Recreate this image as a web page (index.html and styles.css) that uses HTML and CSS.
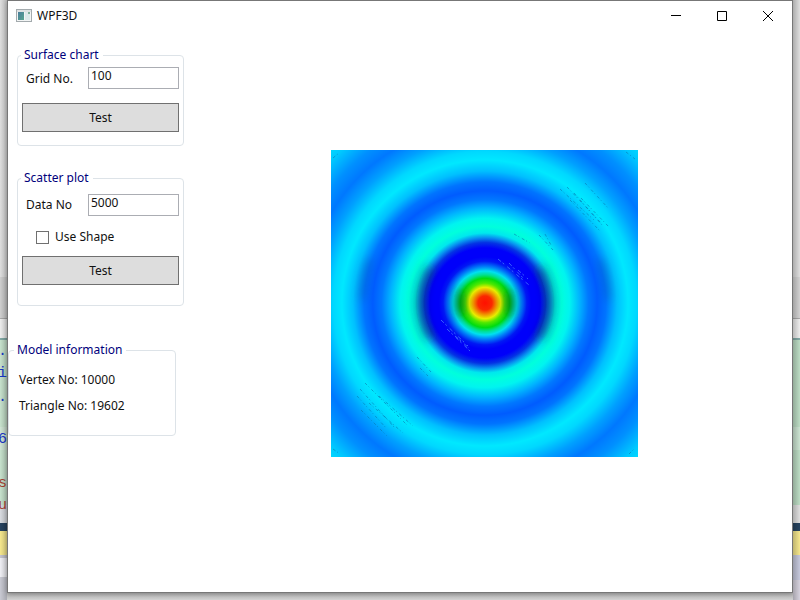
FILE: index.html
```html
<!DOCTYPE html>
<html lang="en">
<head>
<meta charset="utf-8">
<title>WPF3D</title>
<link rel="stylesheet" href="styles.css">
</head>
<body>
<div class="desktop">
  <div class="edge edge-left" aria-hidden="true">
    <span class="code">0.</span>
    <span class="code">ui</span>
    <span class="code gap-m">r.</span>
    <span class="code gap-l">o6</span>
    <span class="code str">s</span>
    <span class="code str low">u</span>
  </div>
  <main class="window">
    <header class="titlebar">
      <svg class="app-icon" width="16" height="14" viewBox="0 0 16 14">
        <defs><linearGradient id="pane" x2="1" y2="1"><stop offset="0" stop-color="#4a7d9c"/><stop offset="1" stop-color="#57a58e"/></linearGradient></defs>
        <rect x=".5" y=".5" width="15" height="12" fill="#f3f5f5" stroke="#a3aaad"/>
        <path d="M1 2h14" stroke="#c9cfd1"/>
        <rect x="2" y="3" width="6" height="8" fill="url(#pane)"/>
        <rect x="9" y="3" width="5" height="8" fill="#dce9ea"/>
        <rect x="12" y="3" width="2" height="2" fill="#7fb09b"/>
      </svg>
      <h1>WPF3D</h1>
      <div class="caption">
        <button aria-label="Minimize"><svg width="12" height="12" viewBox="0 0 12 12"><path d="M1 5.500h10"/></svg></button>
        <button aria-label="Maximize"><svg width="12" height="12" viewBox="0 0 12 12"><path d="M1.500 1.500h9v9h-9z"/></svg></button>
        <button aria-label="Close"><svg width="12" height="12" viewBox="0 0 12 12"><path d="M1 1l10 10M11 1L1 11"/></svg></button>
      </div>
    </header>
    <div class="content">
      <aside class="panel">
        <fieldset class="surface">
          <legend>Surface chart</legend>
          <div class="row"><label for="grid">Grid No.</label><input id="grid" type="text" value="100"></div>
          <button class="test">Test</button>
        </fieldset>
        <fieldset class="scatter">
          <legend>Scatter plot</legend>
          <div class="row"><label for="data">Data No</label><input id="data" type="text" value="5000"></div>
          <label class="check"><input type="checkbox"> Use Shape</label>
          <button class="test">Test</button>
        </fieldset>
        <fieldset class="model">
          <legend>Model information</legend>
          <p>Vertex No: 10000</p>
          <p>Triangle No: 19602</p>
        </fieldset>
      </aside>
      <section class="view">
        <svg class="plot" viewBox="0 0 307 307" role="img" aria-label="Surface chart">
          <defs>
            <radialGradient id="wave" gradientUnits="userSpaceOnUse" cx="154" cy="153" r="220">
              <stop offset="0" stop-color="#ff1000"/>
              <stop offset=".032" stop-color="#fa2800"/>
              <stop offset=".052" stop-color="#f09000"/>
              <stop offset=".071" stop-color="#e8ee00"/>
              <stop offset=".09" stop-color="#50e800"/>
              <stop offset=".112" stop-color="#00dc10"/>
              <stop offset=".128" stop-color="#00e090"/>
              <stop offset=".145" stop-color="#00e0f0"/>
              <stop offset=".165" stop-color="#0080f8"/>
              <stop offset=".19" stop-color="#0018f4"/>
              <stop offset=".21" stop-color="#0000fa"/>
              <stop offset=".25" stop-color="#0000fa"/>
              <stop offset=".275" stop-color="#0434e4"/>
              <stop offset=".298" stop-color="#0894f0"/>
              <stop offset=".318" stop-color="#00e8ee"/>
              <stop offset=".348" stop-color="#00ffdc"/>
              <stop offset=".385" stop-color="#00f4f0"/>
              <stop offset=".43" stop-color="#00b4ff"/>
              <stop offset=".47" stop-color="#0078ff"/>
              <stop offset=".51" stop-color="#005cff"/>
              <stop offset=".55" stop-color="#0074ff"/>
              <stop offset=".6" stop-color="#00c0ff"/>
              <stop offset=".65" stop-color="#00e8ff"/>
              <stop offset=".69" stop-color="#00d8ff"/>
              <stop offset=".75" stop-color="#00a0ff"/>
              <stop offset=".81" stop-color="#0078ff"/>
              <stop offset=".87" stop-color="#0090ff"/>
              <stop offset=".95" stop-color="#00c8ff"/>
              <stop offset="1" stop-color="#00dcff"/>
            </radialGradient>
            <filter id="soft" x="-1" y="-1" width="3" height="3"><feGaussianBlur stdDeviation="5"/></filter>
          </defs>
          <rect width="307" height="307" fill="url(#wave)"/>
          <g class="shade" filter="url(#soft)">
            <ellipse cx="129" cy="153" rx="6" ry="15"/>
            <ellipse cx="179" cy="153" rx="6" ry="15"/>
            <path d="M103 118q-20 35 0 70l-8 2q-20-37 0-74zM205 118q20 35 0 70l8 2q20-37 0-74z"/>
            <path class="faint" d="M36 108q-8 20-8 42l5 0q2-22 8-40zM272 108q8 20 8 42l-5 0q-2-22-8-40z"/>
          </g>
          <g class="grain">
            <path d="M229 39l34 31M236 37l34 36M243 43l28 32M250 48l28 29M239 50l30 31M254 33l24 26"/>
            <path d="M29 239l34 38M34 233l42 42M26 246l30 33M48 246l34 30M38 253l34 30M30 260l26 26"/>
            <path d="M208 85l14 15M214 84l6 11M183 84l16 9M86 207l14 15M89 218l8 8"/>
            <path d="M295 2l9 7M2 8l6-5M2 299l7 5M298 304l6-6"/>
          </g>
          <g class="glint">
            <path d="M167 109l31 26M178 113l15 16M187 120l10 9M110 170l27 26M116 179l23 22M124 186l14 12"/>
          </g>
        </svg>
      </section>
    </div>
  </main>
  <div class="edge edge-right" aria-hidden="true"></div>
</div>
</body>
</html>
```
FILE: styles.css
```css
* { box-sizing: border-box; }
body {
  margin: 0;
  font: 12px/16px "Noto Sans", "Open Sans", sans-serif;
  color: #111;
}
.desktop {
  display: grid;
  grid-template-columns: 7px minmax(0, 1fr) 7px;
  min-height: 100vh;
  background: linear-gradient(to top, #d2d2d2, #b5b5b5 7px, #b5b5b5);
}
.edge { overflow: hidden; }
.edge-left {
  display: flex;
  flex-direction: column;
  align-items: flex-end;
  padding-top: 341px;
  background:
    linear-gradient(to right, transparent, rgba(0, 0, 0, .16)),
    linear-gradient(#dedede 277px, #cecece 277px 318px, #a8a8a8 318px 319px, #ededed 319px 338px,
      #82aaa6 338px 340px, #c6e1cc 340px 427px, #d0e5d5 427px 450px, #c6e1cc 450px 505px,
      #d8dbe0 505px 523px, #27435f 523px 531px, #f5e78d 531px 555px, #c4c4ce 555px 558px,
      #efeff4 558px 577px, #c8c9d2 577px);
}
.edge-right {
  background:
    linear-gradient(to left, transparent, rgba(0, 0, 0, .22)),
    linear-gradient(#dedede 277px, #d2d2d2 277px 318px, #a8a8a8 318px 319px, #ededed 319px 338px,
      #82aaa6 338px 340px, #bcdcc4 340px 427px, #cce4d2 427px 450px, #bcdcc4 450px 505px,
      #dedede 505px 523px, #27435f 523px 531px, #f5e78d 531px 555px, #c5c8dc 555px 580px,
      #d6d2dd 580px);
}
.code {
  font: 15px/22px "Liberation Mono", monospace;
  color: #1733c0;
}
.gap-m { padding-top: 2px; }
.gap-l { padding-top: 20px; }
.str { color: #a04030; padding-top: 22px; }
.str.low { padding-top: 0; }
.window {
  display: flex;
  flex-direction: column;
  margin-bottom: 7px;
  background: #fff;
  border: 1px solid #777;
  box-shadow: 0 1px 5px rgba(0, 0, 0, .3);
}
.titlebar {
  display: flex;
  align-items: center;
  height: 29px;
  padding: 0 1px 0 8px;
}
h1 {
  margin: 0 0 0 5px;
  font-size: 12px;
  font-weight: 400;
}
.caption { display: flex; margin-left: auto; }
.caption button {
  display: grid;
  place-items: center;
  width: 46px;
  height: 28px;
  padding: 0;
  border: 0;
  background: none;
}
.caption svg { fill: none; stroke: #000; }
.content {
  flex: 1;
  display: flex;
}
.panel {
  display: flex;
  flex-direction: column;
  width: 176px;
  padding-top: 17px;
}
fieldset {
  min-width: 0;
  margin: 0 0 0 9px;
  padding: 0 4px;
  border: 1px solid #dde3e8;
  border-radius: 4px;
}
legend {
  padding: 0 4px 0 3px;
  margin-left: -1px;
  color: #00007c;
}
.surface { height: 99px; }
.scatter { height: 136px; margin-top: 24px; }
.model { height: 94px; width: 168px; margin-left: 0; margin-top: 36px; padding: 0 10px; }
.model legend { margin-left: -5px; }
.model p { margin: 14px 0 0; }
.model p + p { margin-top: 10px; }
.row {
  display: flex;
  align-items: center;
  margin-top: 4px;
}
.row label { width: 66px; padding: 2px 0 0 4px; }
.row input {
  flex: 1;
  min-width: 0;
  height: 22px;
  padding: 0 2px 5px;
  border: 1px solid #abadb3;
  background: #fff;
  font: inherit;
  color: inherit;
}
.scatter .row { margin-top: 8px; }
.scatter .row label { padding-top: 0; }
.check {
  display: flex;
  align-items: center;
  gap: 6px;
  margin: 13px 0 0 14px;
}
.check input {
  appearance: none;
  width: 13px;
  height: 13px;
  margin: 0;
  border: 1px solid #707070;
  background: #fff;
}
.test {
  display: block;
  width: 100%;
  height: 29px;
  margin-top: 14px;
  padding: 0;
  border: 1px solid #707070;
  background: #ddd;
  font: inherit;
  color: inherit;
}
.scatter .test { margin-top: 11px; }
.view {
  flex: 1;
  display: grid;
  justify-items: center;
  align-items: start;
  padding: 120px 7px 0 0;
}
.plot {
  display: block;
  width: 100%;
  max-width: 307px;
}
.shade { fill: #003020; fill-opacity: .42; }
.shade .faint { fill-opacity: .16; }
.grain { fill: none; stroke: #0878b0; stroke-opacity: .6; stroke-dasharray: 3 2 1 3; }
.glint { fill: none; stroke: #58a0ff; stroke-opacity: .6; stroke-dasharray: 4 2 2 4; }
```
